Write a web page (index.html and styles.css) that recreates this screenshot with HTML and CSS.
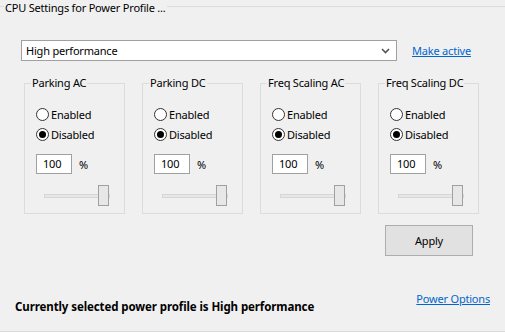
FILE: index.html
```html
<!DOCTYPE html>
<html lang="en">
<head>
    <meta charset="UTF-8">
    <title>CPU Settings</title>
    <link rel="stylesheet" href="styles.css">
</head>
<body>

    <fieldset class="profile">
        <legend>CPU Settings for Power Profile ...</legend>

        <!-- Choix du profil -->
        <div class="profile-row">
            <div class="combo">
                <span>High performance</span>
                <svg class="chevron" width="9" height="6" viewBox="0 0 9 6">
                    <path d="M1 1 L4.5 4.5 L8 1" fill="none" stroke="#555" stroke-width="1.6"/>
                </svg>
            </div>
            <a href="#" class="link">Make active</a>
        </div>

        <!-- Groupes de parametres -->
        <div class="groups">
            <fieldset class="group">
                <legend>Parking AC</legend>
                <div class="radio"><span class="dot"></span>Enabled</div>
                <div class="radio"><span class="dot checked"></span>Disabled</div>
                <div class="value-row"><div class="textbox">100</div><span>%</span></div>
                <div class="slider"><div class="track"></div><div class="thumb"></div></div>
            </fieldset>

            <fieldset class="group">
                <legend>Parking DC</legend>
                <div class="radio"><span class="dot"></span>Enabled</div>
                <div class="radio"><span class="dot checked"></span>Disabled</div>
                <div class="value-row"><div class="textbox">100</div><span>%</span></div>
                <div class="slider"><div class="track"></div><div class="thumb"></div></div>
            </fieldset>

            <fieldset class="group">
                <legend>Freq Scaling AC</legend>
                <div class="radio"><span class="dot"></span>Enabled</div>
                <div class="radio"><span class="dot checked"></span>Disabled</div>
                <div class="value-row"><div class="textbox">100</div><span>%</span></div>
                <div class="slider"><div class="track"></div><div class="thumb"></div></div>
            </fieldset>

            <fieldset class="group">
                <legend>Freq Scaling DC</legend>
                <div class="radio"><span class="dot"></span>Enabled</div>
                <div class="radio"><span class="dot checked"></span>Disabled</div>
                <div class="value-row"><div class="textbox">100</div><span>%</span></div>
                <div class="slider"><div class="track"></div><div class="thumb"></div></div>
            </fieldset>
        </div>

        <div class="actions">
            <button class="apply">Apply</button>
        </div>

        <div class="status">
            <strong>Currently selected power profile is High performance</strong>
            <a href="#" class="link">Power Options</a>
        </div>
    </fieldset>

</body>
</html>
```

FILE: styles.css
```css
body {
    font-family: "Noto Sans", sans-serif;
    font-size: 11px;
    letter-spacing: -0.2px;
    color: #000;
    background-color: #f0f0f0;
    margin: 0;
    overflow: hidden;
}

.profile {
    margin: 0 0 0 -2px;
    width: 520px;
    height: 332px;
    box-sizing: border-box;
    border: none;
    border-top: 1px solid #dcdcdc;
    border-bottom: 1px solid #dcdcdc;
    padding: 0;
}

.profile > legend {
    margin-left: 6px;
    padding: 0 1px;
    line-height: 12px;
    position: relative;
    top: 1.5px;
}

.profile-row {
    display: flex;
    align-items: center;
    margin: 28px 0 0 23px;
}

.combo {
    height: 19px;
    width: 364px;
    border: 1px solid #a0a0a0;
    background-color: #fff;
    display: flex;
    align-items: center;
    justify-content: space-between;
    padding: 0 6px 0 4px;
}

.link {
    color: #0066cc;
    text-decoration: underline;
    margin-left: 15px;
}

.groups {
    display: grid;
    grid-template-columns: repeat(4, 101px);
    column-gap: 17px;
    margin: 15px 0 0 26px;
}

.group {
    margin: 0;
    height: 138px;
    box-sizing: border-box;
    border: 1px solid #dcdcdc;
    padding: 0 0 0 11px;
    min-width: 0;
}

.group > legend {
    margin-left: -5px;
    padding: 0 1px;
    line-height: 14px;
}

.radio {
    display: flex;
    align-items: center;
    height: 20px;
}

.radio:first-of-type {
    margin-top: 14px;
}

.dot {
    width: 11px;
    height: 11px;
    border: 1px solid #333;
    border-radius: 50%;
    background-color: #fff;
    margin-right: 2px;
    display: flex;
    align-items: center;
    justify-content: center;
}

.dot.checked::after {
    content: "";
    width: 7px;
    height: 7px;
    border-radius: 50%;
    background-color: #000;
}

.value-row {
    display: flex;
    align-items: center;
    margin-top: 10px;
}

.textbox {
    width: 28px;
    height: 18px;
    line-height: 18px;
    border: 1px solid #a0a0a0;
    background-color: #fff;
    padding-left: 6px;
    margin-right: 7px;
}

.slider {
    position: relative;
    height: 21px;
    width: 66px;
    margin: 11px 0 0 8px;
}

.track {
    position: absolute;
    left: 0;
    right: 0;
    top: 9px;
    height: 2px;
    border: 1px solid #d6d6d6;
    background-color: #e7e7e7;
}

.thumb {
    position: absolute;
    left: 54px;
    top: 0;
    width: 9px;
    height: 19px;
    border: 1px solid #a0a0a0;
    background-color: #e7e7e7;
}

.actions {
    display: flex;
    margin: 11px 0 0 387px;
}

.apply {
    width: 88px;
    height: 31px;
    font-family: inherit;
    font-size: 11px;
    letter-spacing: -0.2px;
    color: #000;
    border: 1px solid #adadad;
    background-color: #e1e1e1;
}

.status {
    display: flex;
    justify-content: space-between;
    align-items: flex-start;
    margin: 35px 0 0 17px;
    width: 475px;
    line-height: 16px;
}

.status strong {
    font-size: 11.5px;
    letter-spacing: -0.1px;
    margin-top: 8px;
}
```
